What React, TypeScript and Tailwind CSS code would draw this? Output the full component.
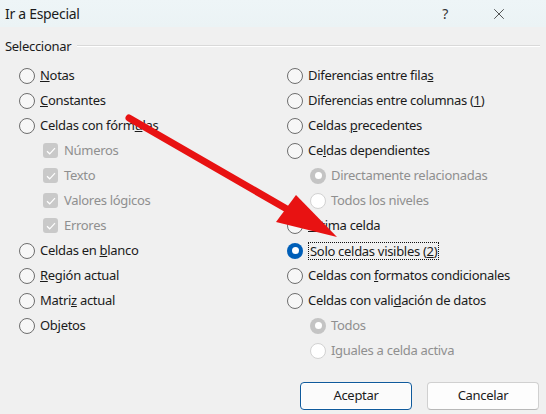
import React from 'react';
import { X } from 'lucide-react';

type Kind = 'radio' | 'check';

interface Item {
  label: React.ReactNode;
  kind: Kind;
  checked?: boolean;
  disabled?: boolean;
  indent?: boolean;
  focus?: boolean;
}

const Radio: React.FC<{ checked?: boolean; disabled?: boolean }> = ({ checked, disabled }) => {
  if (checked && disabled) {
    return (
      <span className="flex h-4 w-4 shrink-0 items-center justify-center rounded-full bg-[#c4c4c4]">
        <span className="h-[7px] w-[7px] rounded-full bg-white" />
      </span>
    );
  }
  if (checked) {
    return (
      <span className="flex h-4 w-4 shrink-0 items-center justify-center rounded-full bg-[#005fb8]">
        <span className="h-[7px] w-[7px] rounded-full bg-white" />
      </span>
    );
  }
  if (disabled) {
    return <span className="h-4 w-4 shrink-0 rounded-full border border-[#d2d2d2] bg-white" />;
  }
  return <span className="h-4 w-4 shrink-0 rounded-full border border-[#6e6e6e] bg-[#f7f7f7]" />;
};

const Check: React.FC = () => (
  <span className="flex h-[15px] w-[15px] shrink-0 items-center justify-center rounded-[3px] bg-[#c9c9c9]">
    <svg width="10" height="8" viewBox="0 0 10 8" fill="none">
      <path d="M1 4.2 L3.7 6.8 L9 1.2" stroke="white" strokeWidth="1.2" />
    </svg>
  </span>
);

const Row: React.FC<{ item: Item }> = ({ item }) => (
  <div className={`flex h-[25px] items-center ${item.indent ? (item.kind === 'check' ? 'pl-[24px]' : 'pl-[23px]') : ''}`}>
    {item.kind === 'radio' ? <Radio checked={item.checked} disabled={item.disabled} /> : <Check />}
    <span
      className={`whitespace-nowrap ${item.kind === 'check' ? 'ml-[6px]' : 'ml-[5px]'} ${
        item.disabled ? 'text-[#8f8f8f]' : 'text-[#1b1b1b]'
      } ${item.focus ? 'border border-dotted border-[#111] px-px leading-[16px]' : ''}`}
    >
      {item.label}
    </span>
  </div>
);

const leftItems: Item[] = [
  { kind: 'radio', label: <><u>N</u>otas</> },
  { kind: 'radio', label: <><u>C</u>onstantes</> },
  { kind: 'radio', label: <>Celdas con fórm<u>u</u>las</> },
  { kind: 'check', indent: true, disabled: true, label: 'Números' },
  { kind: 'check', indent: true, disabled: true, label: 'Texto' },
  { kind: 'check', indent: true, disabled: true, label: 'Valores lógicos' },
  { kind: 'check', indent: true, disabled: true, label: 'Errores' },
  { kind: 'radio', label: <>Celdas en <u>b</u>lanco</> },
  { kind: 'radio', label: <><u>R</u>egión actual</> },
  { kind: 'radio', label: <>Matri<u>z</u> actual</> },
  { kind: 'radio', label: <>Ob<u>j</u>etos</> },
];

const rightItems: Item[] = [
  { kind: 'radio', label: <>Diferencias entre fila<u>s</u></> },
  { kind: 'radio', label: <>Diferencias entre columnas (<u>1</u>)</> },
  { kind: 'radio', label: <>Celdas <u>p</u>recedentes</> },
  { kind: 'radio', label: <>Ce<u>l</u>das dependientes</> },
  { kind: 'radio', indent: true, disabled: true, checked: true, label: 'Directamente relacionadas' },
  { kind: 'radio', indent: true, disabled: true, label: 'Todos los niveles' },
  { kind: 'radio', label: <><u>Ú</u>ltima celda</> },
  { kind: 'radio', checked: true, focus: true, label: <>Solo celdas visibles (<u>2</u>)</> },
  { kind: 'radio', label: <>Celdas con <u>f</u>ormatos condicionales</> },
  { kind: 'radio', label: <>Celdas con vali<u>d</u>ación de datos</> },
  { kind: 'radio', indent: true, disabled: true, checked: true, label: 'Todos' },
  { kind: 'radio', indent: true, disabled: true, label: 'Iguales a celda activa' },
];

const App: React.FC = () => {
  return (
    <div
      className="relative flex h-[414px] w-[546px] flex-col overflow-hidden bg-[#f0f0f0] text-[13px] tracking-[-0.3px] text-[#1b1b1b]"
      style={{ fontFamily: '"Noto Sans", "Open Sans", sans-serif' }}
    >
      {/* Title bar */}
      <div className="flex h-[27px] shrink-0 items-center bg-gradient-to-b from-[#eef5f7] to-[#ebf3f5] pl-[5px]">
        <span className="flex-1 text-[14px] leading-none">Ir a Especial</span>
        <span className="mr-[42px] text-[14px] leading-none text-[#333]">?</span>
        <X className="mr-[38px] h-[18px] w-[18px] text-[#333]" strokeWidth={1.1} />
      </div>

      {/* Group header */}
      <div className="mt-[9px] flex h-[20px] items-center pl-[5px] pr-[6px]">
        <span className="leading-none">Seleccionar</span>
        <span className="ml-[6px] flex-1 border-t border-[#d9d9d9] border-b-white border-b" />
      </div>

      {/* Options */}
      <div className="mt-[7px] grid grid-cols-[268px_1fr] pl-[19px]">
        <div className="flex flex-col">
          {leftItems.map((it, i) => (
            <Row key={i} item={it} />
          ))}
        </div>
        <div className="flex flex-col">
          {rightItems.map((it, i) => (
            <Row key={i} item={it} />
          ))}
        </div>
      </div>

      {/* Buttons */}
      <div className="mt-[19px] flex justify-end gap-[15px] pr-[7px]">
        <button className="h-[28px] w-[112px] rounded-[4px] border border-[#0f5a9c] bg-[#fbfbfb] text-[13px] text-[#1b1b1b] shadow-[inset_0_0_0_1px_#ffffff]">
          Aceptar
        </button>
        <button className="h-[28px] w-[112px] rounded-[4px] border border-[#d0d0d0] border-b-[#b8b8b8] bg-[#fdfdfd] text-[13px] text-[#1b1b1b]">
          Cancelar
        </button>
      </div>

      {/* Red annotation arrow */}
      <svg className="pointer-events-none absolute left-0 top-0" width="546" height="414" viewBox="0 0 546 414">
        <line x1="129" y1="118" x2="292" y2="212" stroke="#e81212" strokeWidth="7" strokeLinecap="round" />
        <polygon points="276,222 296,195 337,237" fill="#e81212" />
      </svg>
    </div>
  );
};

export default App;
